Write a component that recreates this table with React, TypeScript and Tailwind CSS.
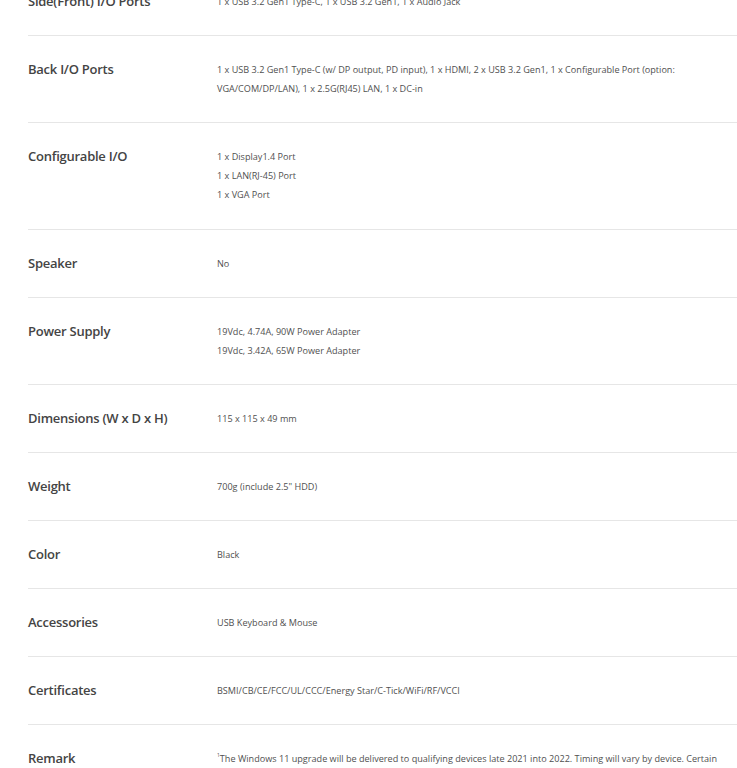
const specs: { label: string; lines: string[]; pad?: string }[] = [
  { label: "Side(Front) I/O Ports", lines: ["1 x USB 3.2 Gen1 Type-C, 1 x USB 3.2 Gen1, 1 x Audio Jack"] },
  {
    label: "Back I/O Ports",
    lines: [
      "1 x USB 3.2 Gen1 Type-C (w/ DP output, PD input), 1 x HDMI, 2 x USB 3.2 Gen1, 1 x Configurable Port (option: VGA/COM/DP/LAN), 1 x 2.5G(RJ45) LAN, 1 x DC-in",
    ],
  },
  {
    label: "Configurable I/O",
    lines: ["1 x Display1.4 Port", "1 x LAN(RJ-45) Port", "1 x VGA Port"],
    pad: "pb-[25px]",
  },
  { label: "Speaker", lines: ["No"] },
  { label: "Power Supply", lines: ["19Vdc, 4.74A, 90W Power Adapter", "19Vdc, 3.42A, 65W Power Adapter"] },
  { label: "Dimensions (W x D x H)", lines: ["115 x 115 x 49 mm"] },
  { label: "Weight", lines: ["700g (include 2.5\" HDD)"] },
  { label: "Color", lines: ["Black"] },
  { label: "Accessories", lines: ["USB Keyboard & Mouse"] },
  { label: "Certificates", lines: ["BSMI/CB/CE/FCC/UL/CCC/Energy Star/C-Tick/WiFi/RF/VCCI"] },
  {
    label: "Remark",
    lines: [
      "The Windows 11 upgrade will be delivered to qualifying devices late 2021 into 2022. Timing will vary by device. Certain features require specific hardware.",
    ],
  },
]

export default function App() {
  return (
    <div className="min-h-screen bg-white overflow-hidden" style={{ fontFamily: '"Open Sans", sans-serif' }}>
      {/* Spec table */}
      <div className="pl-[28px] -mt-[32px]">
        {specs.map((row) => (
          <div
            key={row.label}
            className={`flex border-b border-[#e6e6e6] pt-[24px] ${row.pad ?? "pb-[24px]"}`}
          >
            <div className="w-[189px] shrink-0 text-[13px] leading-[18px] font-semibold tracking-[-0.25px] text-[#444444]">
              {row.label}
            </div>
            <div className="flex-1 pr-[8px] text-[9.1px] leading-[19px] text-[#505050]">
              {row.lines.map((line) => (
                <p key={line}>
                  {row.label === "Remark" && (
                    <span className="inline-block align-top text-[5px] leading-[12px]">1</span>
                  )}
                  {line}
                </p>
              ))}
            </div>
          </div>
        ))}
      </div>
    </div>
  )
}
